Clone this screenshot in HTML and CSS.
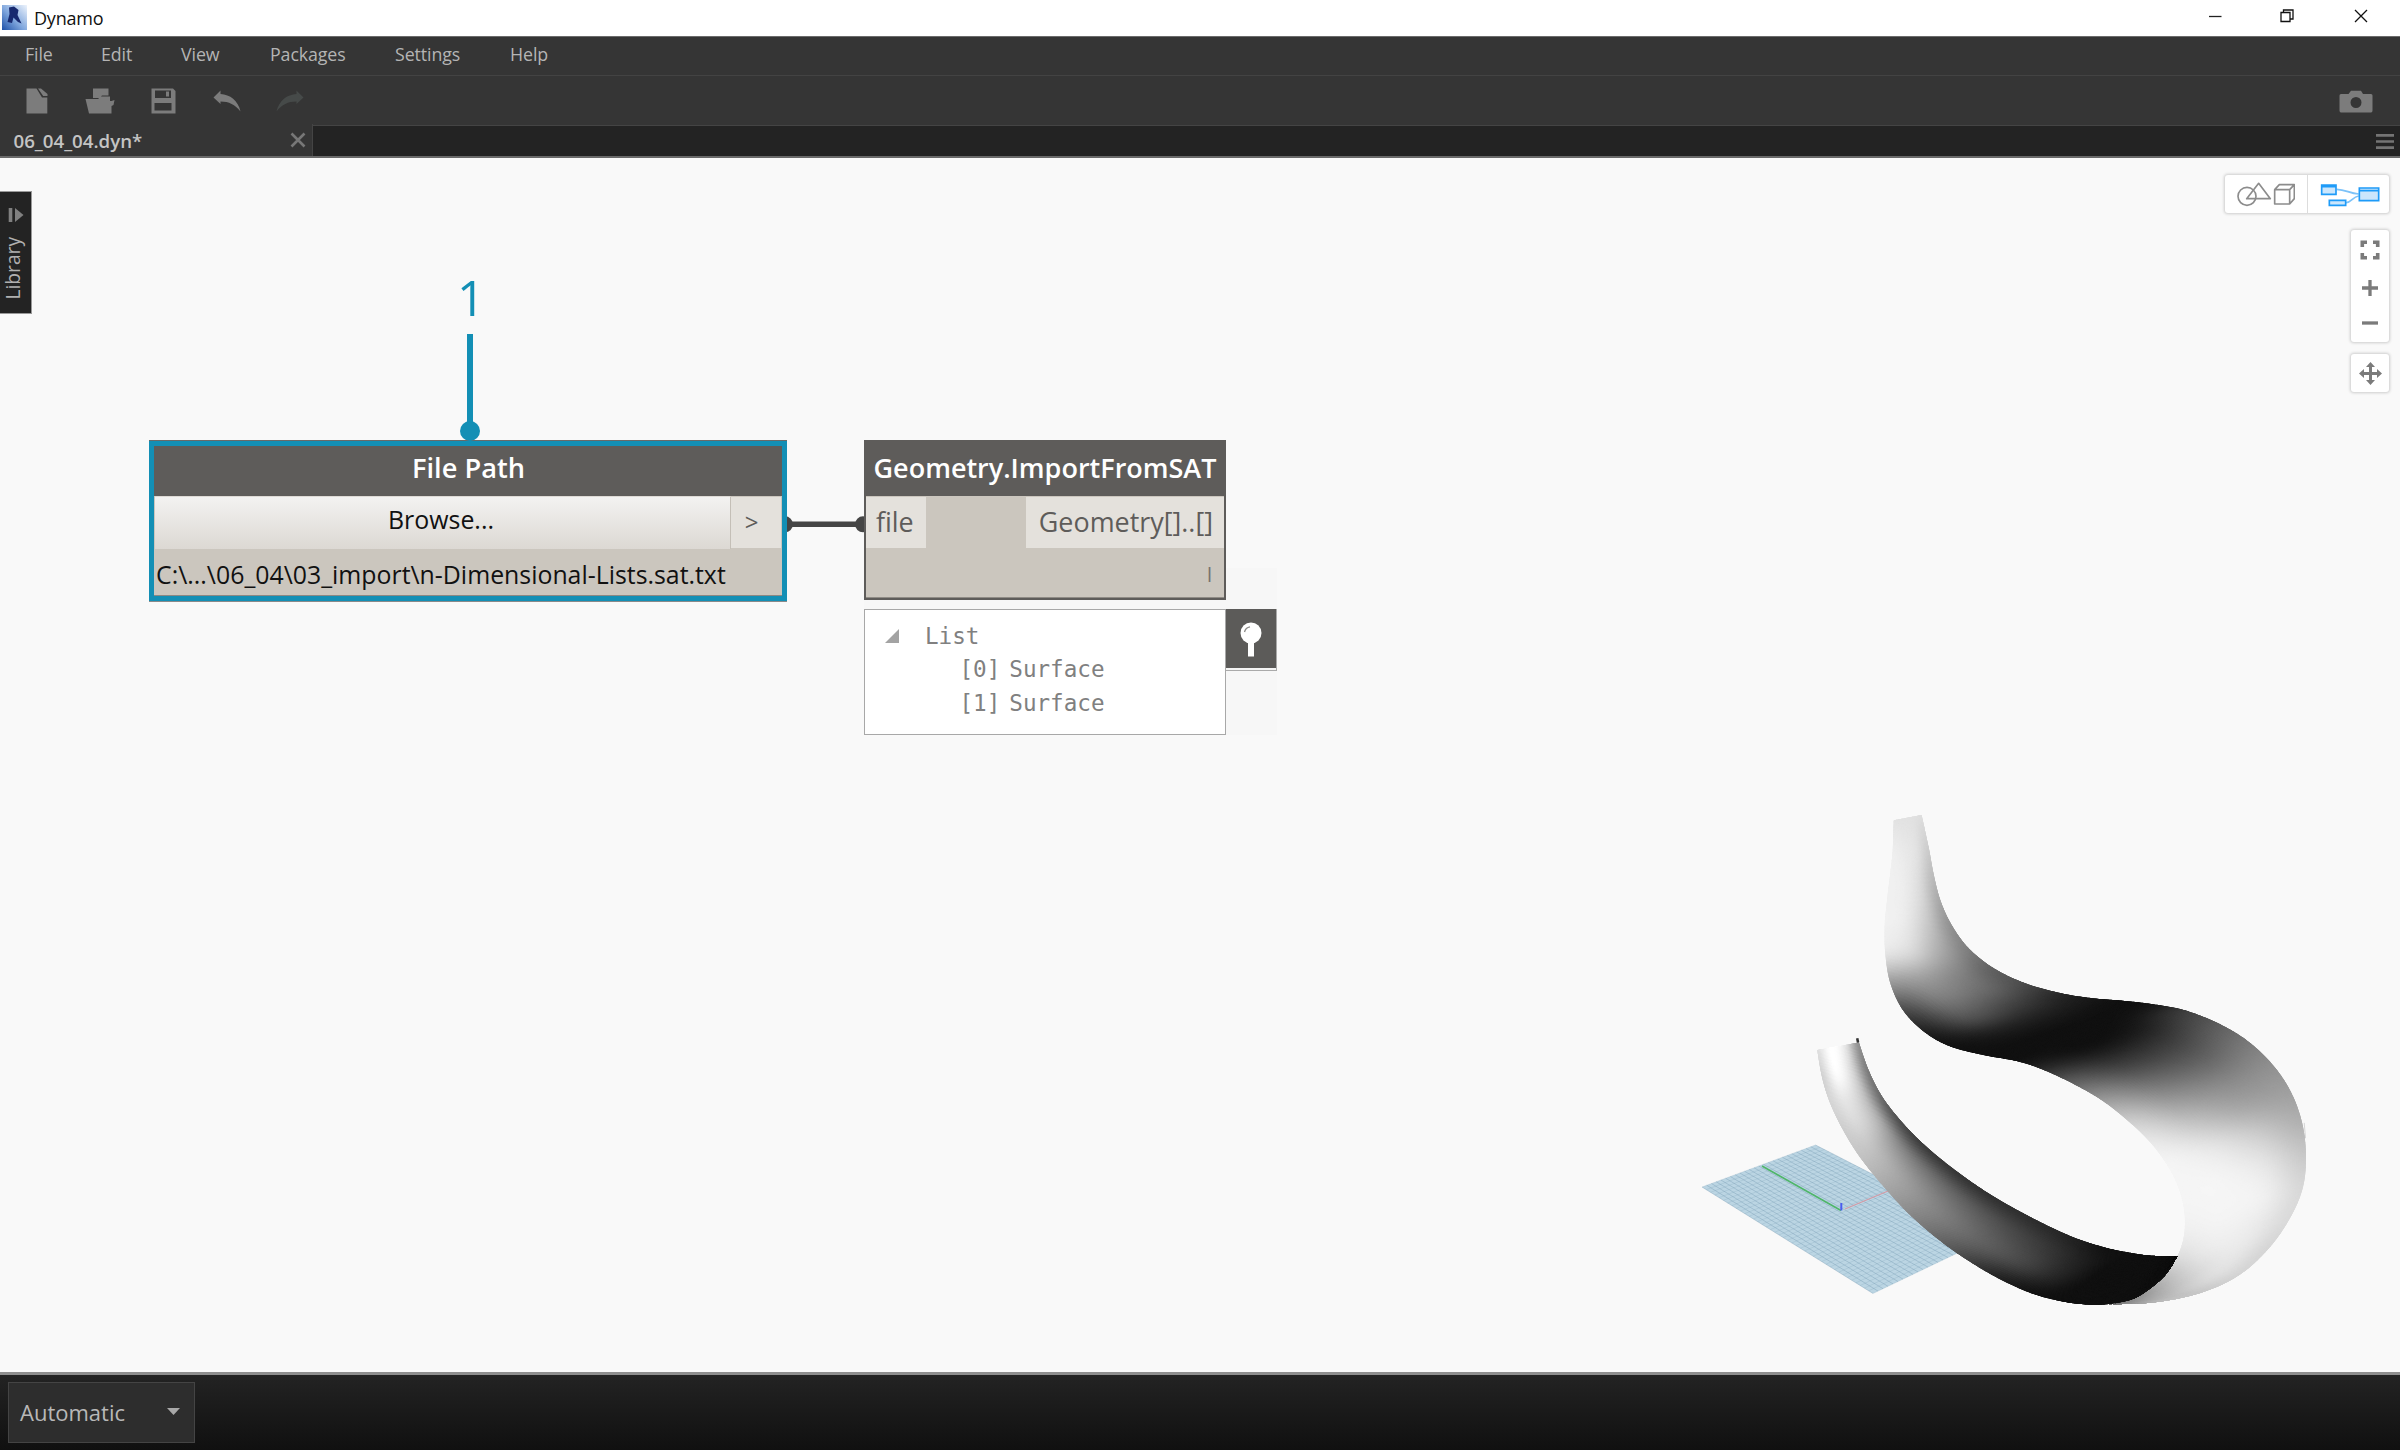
FILE: index.html
```html
<!DOCTYPE html>
<html lang="en">
<head>
<meta charset="utf-8">
<title>Dynamo</title>
<link rel="stylesheet" href="styles.css">
</head>
<body>
<header class="titlebar">
  <svg class="app-icon" width="25" height="25" viewBox="0 0 25 25">
    <defs>
      <linearGradient id="appbg" x1="0" y1="1" x2="1" y2="0">
        <stop offset="0" stop-color="#1d50a8"/><stop offset=".45" stop-color="#7fa6dd"/><stop offset="1" stop-color="#eef4fc"/>
      </linearGradient>
    </defs>
    <rect width="25" height="25" fill="url(#appbg)"/>
    <path d="M7 2.500L12 1.500L16.500 5L15.500 10L19.500 18.500L16 17L11.500 12.500L10 18L5.500 17L7.500 9Z" fill="#17296f"/>
  </svg>
  <span class="app-name">Dynamo</span>
  <div class="window-buttons">
    <svg width="14" height="14" viewBox="0 0 14 14"><path d="M1 7.500H13.500" stroke="#222" stroke-width="1.300"/></svg>
    <svg width="14" height="14" viewBox="0 0 14 14"><path d="M1 3.500H10V12.500H1ZM3.500 3V1H13V10H10.500" fill="none" stroke="#111" stroke-width="1.300"/></svg>
    <svg width="14" height="14" viewBox="0 0 14 14"><path d="M1 1L13 13M13 1L1 13" stroke="#111" stroke-width="1.300"/></svg>
  </div>
</header>
<nav class="menubar">
  <span>File</span><span>Edit</span><span>View</span><span>Packages</span><span>Settings</span><span>Help</span>
</nav>
<div class="toolbar">
  <div class="tool"><svg width="22" height="26" viewBox="0 0 22 26"><path d="M.5.500H10.500L16 9.500H21.300V25.500H.500Z M12 .500H15L21.500 6V8H17.200Z" fill="#7c7c7c"/></svg></div>
  <div class="tool"><svg width="30" height="26" viewBox="0 0 30 26"><path d="M8 .500H23.500V7.500H17L14.500 10H8Z M.5 11H13L15.500 8.500H25V13H26.500L29.500 12L28.500 17L26.500 18V25.500H4Z" fill="#7c7c7c"/></svg></div>
  <div class="tool"><svg width="25" height="26" viewBox="0 0 25 26"><path fill-rule="evenodd" d="M.5.500H22L24.500 3V25.500H.500ZM4 2.500V10H20V2.500ZM3.500 15V22.500H20.500V15ZM15 3.500H18V8.500H15Z" fill="#7c7c7c"/></svg></div>
  <div class="tool"><svg width="28" height="22" viewBox="0 0 28 22"><path d="M.5 7.500L7.500.500V4C17 4.500 25 10.500 27.500 21.500C22 14.500 16 11.500 7.500 11.500V14Z" fill="#7c7c7c"/></svg></div>
  <div class="tool"><svg width="28" height="22" viewBox="0 0 28 22"><path d="M27.500 7.500L20.500.500V4C11 4.500 3 10.500.500 21.500C6 14.500 12 11.500 20.500 11.500V14Z" fill="#464a49"/></svg></div>
  <svg class="camera" width="34" height="23" viewBox="0 0 34 23"><path fill-rule="evenodd" d="M2 4H9.500L12 .800H22L24 4H32Q33.500 4 33.500 5.500V20.500Q33.500 22.500 32 22.500H2Q.500 22.500.500 20.500V5.500Q.500 4 2 4ZM17 7A5.500 5.500 0 1 0 17 18A5.500 5.500 0 1 0 17 7Z" fill="#7c7c7c"/></svg>
</div>
<div class="tabstrip">
  <div class="tab"><span>06_04_04.dyn*</span>
    <svg width="16" height="16" viewBox="0 0 16 16"><path d="M1.500 1.500L14.500 14.500M14.500 1.500L1.500 14.500" stroke="#777" stroke-width="2.600"/></svg>
  </div>
  <svg class="tab-menu" width="18" height="17" viewBox="0 0 18 17"><path d="M0 2.300H18M0 8.500H18M0 14.700H18" stroke="#747474" stroke-width="2.700"/></svg>
</div>

<main class="workspace">
  <canvas id="scene" class="scene" width="660" height="560"></canvas>

  <div class="library">
    <svg width="16" height="16" viewBox="0 0 16 16"><path d="M2.500 1V15" stroke="#808080" stroke-width="3.600"/><path d="M7 1L15.500 8L7 15Z" fill="#808080"/></svg>
    <span>Library</span>
  </div>

  <svg class="wire" width="100" height="20" viewBox="0 0 100 20"><path d="M10 10.300H86" stroke="#454545" stroke-width="5.500"/><circle cx="9" cy="10.300" r="8" fill="#454545"/><circle cx="87" cy="10.300" r="8" fill="#454545"/></svg>

  <section class="node file-node">
    <h2>File Path</h2>
    <div class="row"><button class="browse">Browse...</button><span class="port-out">&gt;</span></div>
    <p class="path">C:\...\06_04\03_import\n-Dimensional-Lists.sat.txt</p>
  </section>

  <div class="callout"><span class="num">1</span><i class="stem"></i><i class="dot"></i></div>

  <div class="preview-zone"></div>
  <section class="node sat-node">
    <h2>Geometry.ImportFromSAT</h2>
    <div class="row"><span class="port-in">file</span><span class="port-geo">Geometry[]..[]</span></div>
    <p class="lacing">l</p>
  </section>
  <div class="preview">
    <div class="list-head"><svg width="14" height="14" viewBox="0 0 14 14"><path d="M14 0V14H0Z" fill="#a3a3a3"/></svg><span>List</span></div>
    <div class="item"><span>[0]</span><span>Surface</span></div>
    <div class="item"><span>[1]</span><span>Surface</span></div>
  </div>
  <div class="pin"><svg width="24" height="36" viewBox="0 0 24 36"><path d="M9 18H15V34.500H9Z" fill="#fff"/><circle cx="12" cy="11" r="10.500" fill="#fff"/><path d="M5.500 10Q6.500 5.500 11 4.800" fill="none" stroke="#8b8a88" stroke-width="1.300"/></svg></div>

  <aside class="controls">
    <div class="card modes">
      <div class="mode"><svg width="58" height="26" viewBox="108 62 174 78"><g fill="none" stroke="#8c8c8c" stroke-width="5" stroke-linejoin="round"><circle cx="138" cy="108" r="27"/><path d="M137 115L173 69L208 115Z"/><path d="M221 88H266V131H221ZM221 88L235 73H280L266 88M280 73V115L266 131"/></g></svg></div>
      <div class="mode"><svg width="60" height="26" viewBox="362 62 180 78"><g fill="#cbe6fc" stroke="#1e9bf8" stroke-width="5"><path d="M412 87C440 88 450 99 478 101M440 127C455 128 460 109 478 107" fill="none" stroke="#7cc2f8"/><path d="M367 74H410V102H367ZM367 79H410M390 120H439V135H390ZM480 83H538V121H480ZM480 91H538"/></g></svg></div>
    </div>
    <div class="card zoomers">
      <svg width="20" height="20" viewBox="0 0 20 20"><path d="M2.300 7V2.300H7M13 2.300H17.700V7M17.700 13V17.700H13M7 17.700H2.300V13" fill="none" stroke="#7b7b7b" stroke-width="3.600"/></svg>
      <svg width="16" height="16" viewBox="0 0 16 16"><path d="M0 8H16M8 0V16" stroke="#7b7b7b" stroke-width="3.300"/></svg>
      <svg width="16" height="16" viewBox="0 0 16 16"><path d="M0 8H16" stroke="#7b7b7b" stroke-width="3.300"/></svg>
    </div>
    <div class="card pan">
      <svg width="23" height="23" viewBox="0 0 23 23"><path d="M3 11.500H20M11.500 3V20" stroke="#7b7b7b" stroke-width="3"/><path d="M11.500 0L16 5H7ZM11.500 23L7 18H16ZM0 11.500L5 7V16ZM23 11.500L18 16V7Z" fill="#7b7b7b"/></svg>
    </div>
  </aside>
</main>

<footer class="runbar">
  <div class="run-mode"><span>Automatic</span><svg width="13" height="7" viewBox="0 0 13 7"><path d="M0 0H13L6.500 7Z" fill="#a8a8a8"/></svg></div>
</footer>
<script src="scene.js"></script>
</body>
</html>
```
FILE: styles.css
```css
* { box-sizing: border-box; }
body {
  margin: 0; width: 2400px; height: 1450px; overflow: hidden;
  display: flex; flex-direction: column;
  font-family: "Open Sans", "Noto Sans", sans-serif; background: #f9f9f9;
}
svg { display: block; flex: none; }
h2, p { margin: 0; font: inherit; }

.titlebar { height: 36px; flex: none; background: #fff; display: flex; align-items: center; padding-left: 2px; }
.app-icon { margin-top: -1px; }
.app-name { font-size: 18px; color: #111; margin-left: 7px; letter-spacing: -.2px; }
.window-buttons { margin-left: auto; display: flex; gap: 59px; padding: 0 32px 4px 0; }
.window-buttons svg:nth-child(2) { position: relative; left: -1px; }

.menubar {
  height: 40px; flex: none; background: #353535; border-top: 1px solid #6b6b6b; border-bottom: 1px solid #434343;
  display: grid; grid-template-columns: 76px 80px 89px 125px 115px auto; align-items: center;
  padding: 0 0 4px 25px; font-size: 17.800px; letter-spacing: -.1px; color: #b4b4b4;
}
.toolbar { height: 49px; flex: none; background: #353535; display: flex; align-items: center; padding: 1px 27px 0 5px; }
.tool { width: 63.400px; display: flex; justify-content: center; }
.camera { margin-left: auto; }
.tabstrip { height: 33px; flex: none; background: #232323; border-top: 1px solid #444; border-bottom: 2px solid #6a6a6a; display: flex; align-items: center; justify-content: space-between; }
.tab { width: 313px; height: 32px; margin-top: -2px; background: #353535; border-right: 1px solid #444; display: flex; align-items: center; justify-content: space-between; padding: 0 6px 0 13.500px; font-size: 18.700px; font-weight: 600; color: #c4c4c4; }
.tab-menu { margin-right: 6px; }

.workspace { flex: 1; position: relative; background: #f9f9f9; overflow: hidden; }
.scene { position: absolute; left: 1680px; top: 621.500px; }

.library { position: absolute; left: 0; top: 33px; width: 32px; height: 123px; background: #232323; border: 1px solid #999; border-left: 0; display: flex; flex-direction: column; align-items: center; padding-top: 15px; gap: 14px; }
.library span { writing-mode: vertical-rl; transform: rotate(180deg); font-size: 19.200px; line-height: 24px; margin-right: 5px; color: #b0b0b0; }

.wire { position: absolute; left: 776px; top: 356px; }
.node { position: absolute; background: #cbc6be; color: #111; }
.node h2 { background: #5e5c5a; color: #fff; font-weight: 600; font-size: 27px; text-align: center; white-space: nowrap; }
.row { display: flex; }
.file-node { left: 149px; top: 283px; width: 638px; height: 160px; border: 5px solid #138fb5; box-shadow: inset 0 -1px #8b8883, 0 1px #8a8a8a, 0 -1px #6b6a68; }
.file-node h2 { height: 50px; line-height: 44px; font-size: 27.200px; padding-left: 1px; }
.file-node .row { height: 53px; padding-left: 1px; }
.browse { width: 576px; height: 53px; border: 0; border-right: 1px solid #c4bfb7; border-top: 1px solid #dedad5; background: linear-gradient(#f3f2f1, #dcd8d3); font: 24.900px "Open Sans", sans-serif; color: #111; padding: 0 3px 9px 0; }
.port-out { width: 50px; height: 51px; margin-top: 1px; background: #e4e1dc; color: #5e5c5a; font-size: 24px; line-height: 50px; text-align: center; padding-right: 9px; }
.path { font-size: 24.850px; line-height: 51px; padding-left: 2px; white-space: nowrap; }

.sat-node { left: 864px; top: 282px; width: 362px; height: 160px; border: 2px solid #5e5c5a; border-top: 0; box-shadow: inset 0 -1px #8f8b85; }
.sat-node h2 { height: 56px; line-height: 56px; }
.sat-node .row { justify-content: space-between; height: 51px; margin-top: 1px; font-size: 26.900px; line-height: 50px; color: #5e5c5a; }
.port-in { width: 60px; background: #e4e1dc; padding-left: 10px; }
.port-geo { width: 198px; background: #e4e1dc; padding-right: 11px; text-align: right; }
.lacing { text-align: right; padding-right: 12px; font-size: 20px; line-height: 54px; color: #77736d; }
.preview-zone { position: absolute; left: 864px; top: 410px; width: 413px; height: 167px; background: #f7f7f7; }
.preview { position: absolute; left: 864px; top: 451px; width: 362px; height: 126px; background: #fff; border: 1.500px solid #a8a8a8; padding-top: 9.500px; font: 22.600px/33.500px "DejaVu Sans Mono", monospace; color: #808080; }
.list-head { display: flex; align-items: center; padding-left: 19.500px; gap: 26.500px; }
.item { display: flex; padding-left: 94.500px; gap: 9px; }
.pin { position: absolute; left: 1226px; top: 451px; width: 51px; height: 62px; background: #5c5b59; border-right: 1px solid #aaa; border-bottom: 1px solid #aaa; box-shadow: inset 0 -2px #f4f4f4; display: flex; justify-content: center; padding-top: 13px; }

.callout { position: absolute; left: 450px; top: 110px; width: 40px; height: 174px; display: flex; flex-direction: column; align-items: center; color: #138fb5; }
.num { font-size: 49px; line-height: 58px; height: 66px; padding-left: 2px; }
.stem { width: 6px; height: 92px; background: #138fb5; }
.dot { width: 20px; height: 20px; border-radius: 50%; background: #138fb5; margin-top: -5px; flex: none; }

.controls { position: absolute; right: 11px; top: 17px; display: flex; flex-direction: column; align-items: flex-end; }
.card { background: #fff; border-radius: 3px; box-shadow: 0 0 3px 1px rgba(0,0,0,.18); display: flex; }
.modes { width: 164px; height: 38px; }
.mode { width: 82px; display: flex; align-items: center; justify-content: center; padding-right: 1px; }
.mode + .mode { border-left: 1px solid #ddd; padding: 0 0 0 3px; }
.zoomers { width: 38px; height: 112px; margin-top: 17px; flex-direction: column; align-items: center; gap: 19.500px; padding-top: 10px; }
.pan { width: 38px; height: 38px; margin-top: 12px; align-items: center; justify-content: center; }

.runbar { height: 78px; flex: none; border-top: 3px solid #8e8e8e; background: linear-gradient(#232323, #101010); padding: 7px 0 0 8px; }
.run-mode { width: 187px; height: 61px; background: #2d2d2d; border: 1px solid #444; display: flex; align-items: center; justify-content: space-between; padding: 0 14px 2px 11px; font-size: 22px; color: #b8b8b8; }
```
FILE: scene.js
```js
// Background 3D view: ground grid, axes and the two imported surfaces.
const ctx = document.getElementById('scene').getContext('2d');

const mix = (a, b, t) => a + (b - a) * t;

function line(x1, y1, x2, y2, color, width) {
  ctx.strokeStyle = color;
  ctx.lineWidth = width;
  ctx.beginPath();
  ctx.moveTo(x1, y1);
  ctx.lineTo(x2, y2);
  ctx.stroke();
}

// Ground plane corners: west, north, east, south.
const W = [22, 407], N = [135.5, 365], E = [313, 456], S = [193, 513.5];
ctx.fillStyle = '#bbd5e3';
ctx.beginPath();
[W, N, E, S].forEach(p => ctx.lineTo(p[0], p[1]));
ctx.closePath();
ctx.fill();
for (let i = 0; i <= 24; i++) {
  const t = i / 24;
  line(mix(W[0], N[0], t), mix(W[1], N[1], t), mix(S[0], E[0], t), mix(S[1], E[1], t), 'rgba(105,145,170,.38)', 0.9);
}
for (let i = 0; i <= 40; i++) {
  const t = i / 40;
  line(mix(W[0], S[0], t), mix(W[1], S[1], t), mix(N[0], E[0], t), mix(N[1], E[1], t), 'rgba(105,145,170,.22)', 0.8);
}
line(82, 386, 161, 430.5, '#4fb56a', 1.6);
line(165, 429, 208, 411, '#d39aa5', 1.1);
line(161.3, 423, 161.3, 430.5, '#4a5cf0', 2);

// Each row is a ruling: left x, y, right x, y, then greys from left to right.
const upper = [
  [508,113,574,98, 226,226,225,223], [505,200,591,190, 238,233,226,205],
  [499,265,603,266, 240,236,221,188],
  [492,335,619,338, 240,236,214,168], [486,412,645,405, 240,232,198,146],
  [488,490,685,470, 226,214,172,128], [500,570,744,526, 152,158,134,98],
  [530,645,820,569, 76,120,106,76], [580,705,905,597, 34,80,64,42],
  [640,745,980,611, 19,36,34,26], [720,770,1060,619, 17,18,19,17],
  [800,787,1130,629, 18,17,17,25], [860,810,1200,645, 42,22,28,60],
  [930,848,1280,682, 96,60,62,92], [1000,895,1350,732, 152,108,98,120],
  [1060,950,1410,800, 200,156,138,144], [1110,1005,1452,875, 228,196,168,160],
  [1150,1065,1478,960, 243,230,206,178], [1180,1130,1487,1050, 245,243,230,200],
  [1197,1200,1480,1140, 244,245,240,215], [1198,1270,1450,1225, 238,242,236,218],
  [1182,1333,1400,1310, 222,232,232,214], [1150,1390,1330,1385, 190,208,222,212],
  [1100,1438,1240,1435, 152,176,196,200], [1040,1465,1130,1462, 120,140,160,180],
  [1000,1469,1000,1469, 90,90,90,90]
];
const front = [
  [326,756,425,735, 222,255,232,146], [337,830,448,812, 208,252,216,124],
  [355,900,478,882, 212,230,196,108], [385,975,518,945, 206,214,176,82],
  [425,1052,570,1010, 196,186,140,62], [480,1133,640,1080, 170,160,118,56],
  [550,1222,730,1155, 134,132,100,50], [640,1310,830,1222, 90,102,80,46],
  [740,1385,930,1278, 40,72,58,36], [830,1435,1010,1309, 20,38,34,20],
  [900,1458,1070,1324, 17,17,17,17], [950,1467,1110,1331, 17,17,17,17],
  [1000,1469,1140,1333, 17,17,17,17], [1060,1459,1160,1334, 17,17,17,17],
  [1100,1438,1170,1334, 17,17,17,17], [1150,1390,1178,1333, 17,17,17,17],
  [1182,1333,1182,1333, 17,17,17,17]
];

function spline(a, b, c, d, t) {
  return 0.5 * (2 * b + (c - a) * t + (2 * a - 5 * b + 4 * c - d) * t * t + (3 * b - a - 3 * c + d) * t * t * t);
}

function refine(rows, steps) {
  const out = [], last = rows.length - 1;
  for (let i = 0; i < last; i++) {
    const a = rows[Math.max(i - 1, 0)], b = rows[i], c = rows[i + 1], d = rows[Math.min(i + 2, last)];
    for (let s = 0; s < steps; s++) out.push(b.map((v, k) => spline(a[k], v, c[k], d[k], s / steps)));
  }
  out.push(rows[last]);
  return out;
}

function shade(r, v) {
  const g = r.slice(4), k = Math.min(Math.floor(v * 3), 2);
  return spline(g[Math.max(k - 1, 0)], g[k], g[k + 1], g[Math.min(k + 2, 3)], v * 3 - k);
}

function surface(rows) {
  const fine = refine(rows, 20), cols = 60;
  ctx.save();
  ctx.beginPath();
  fine.forEach(r => ctx.lineTo(r[0], r[1]));
  fine.slice().reverse().forEach(r => ctx.lineTo(r[2], r[3]));
  ctx.closePath();
  ctx.clip();
  ctx.lineWidth = 5;
  for (let i = 0; i < fine.length - 1; i++) {
    const p = fine[i], q = fine[i + 1];
    for (let j = 0; j < cols; j++) {
      const u = j / cols, v = (j + 1) / cols;
      const g = Math.round(Math.max(17, Math.min(255, shade(p, (u + v) / 2))));
      ctx.fillStyle = ctx.strokeStyle = `rgb(${g},${g},${g})`;
      ctx.beginPath();
      ctx.moveTo(mix(p[0], p[2], u), mix(p[1], p[3], u));
      ctx.lineTo(mix(p[0], p[2], v), mix(p[1], p[3], v));
      ctx.lineTo(mix(q[0], q[2], v), mix(q[1], q[3], v));
      ctx.lineTo(mix(q[0], q[2], u), mix(q[1], q[3], u));
      ctx.closePath();
      ctx.fill();
      ctx.stroke();
    }
  }
  ctx.restore();
}

// Surface rows use a finer unit than canvas pixels.
ctx.lineJoin = 'round';
ctx.scale(660 / 1568, 1 / 2.8);
surface(upper);
surface(front);
line(421, 723, 423, 735, '#333', 6);
line(1483, 960, 1486, 1003, 'rgba(70,70,70,.35)', 1.5);
```
